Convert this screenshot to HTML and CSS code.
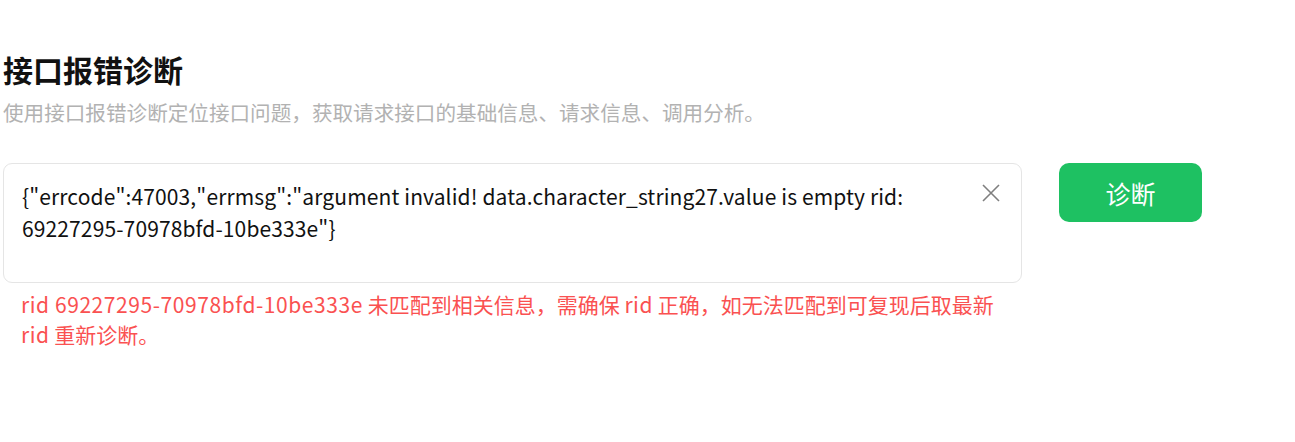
FILE: index.html
```html
<!DOCTYPE html>
<html lang="zh-CN">
<head>
<meta charset="utf-8">
<title>接口报错诊断</title>
<link rel="stylesheet" href="styles.css">
</head>
<body>
<div class="page">
  <h1 class="title">接口报错诊断</h1>
  <p class="desc">使用接口报错诊断定位接口问题，获取请求接口的基础信息、请求信息、调用分析。</p>
  <div class="row">
    <div class="field">
      <div class="input">{"errcode":47003,"errmsg":"argument invalid! data.character_string27.value is empty rid: 69227295-70978bfd-10be333e"}</div>
      <span class="clear" aria-label="清除">
        <svg width="20" height="20" viewBox="0 0 20 20"><path d="M2 2 L18 18 M18 2 L2 18" stroke="#7f7f7f" stroke-width="1.6" fill="none"/></svg>
      </span>
      <div class="error"><span class="latin">rid 69227295-70978bfd-10be333e</span> 未匹配到相关信息，需确保 <span class="latin">rid</span> 正确，如无法匹配到可复现后取最新 <span class="latin">rid</span> 重新诊断。</div>
    </div>
    <button class="btn">诊断</button>
  </div>
</div>
</body>
</html>
```

FILE: styles.css
```css
html, body {
  margin: 0;
  padding: 0;
  background: #fff;
}
body {
  font-family: "Noto Sans CJK SC", "Noto Sans", sans-serif;
  color: #1a1a1a;
}
.page {
  padding: 48px 0 0 3px;
}
.title {
  margin: 0;
  font-size: 30px;
  line-height: 42px;
  font-weight: 700;
  color: #111;
}
.desc {
  margin: 7px 0 0;
  font-size: 20.6px;
  line-height: 30px;
  color: #b2b2b2;
}
.row {
  display: flex;
  align-items: flex-start;
  gap: 37px;
  margin-top: 36px;
}
.field {
  position: relative;
  width: 1019px;
}
.input {
  box-sizing: border-box;
  min-height: 120px;
  border: 1px solid #e5e5e5;
  border-radius: 9px;
  padding: 17px 64px 17px 18px;
  font-size: 21px;
  letter-spacing: 0.12px;
  line-height: 31.5px;
  color: #111;
  word-break: break-word;
}
.clear {
  position: absolute;
  top: 20px;
  right: 21px;
  width: 20px;
  height: 20px;
  display: flex;
}
.error {
  margin-top: 7px;
  padding: 0 10px 0 18px;
  font-size: 21px;
  line-height: 29.5px;
  color: #fa5151;
}
.latin {
  letter-spacing: 0.57px;
}
.btn {
  width: 143px;
  height: 59px;
  border: none;
  border-radius: 10px;
  background: #1ec162;
  color: #fff;
  font-family: "Noto Sans CJK SC", sans-serif;
  font-size: 25px;
  padding: 0;
  cursor: pointer;
}
```
